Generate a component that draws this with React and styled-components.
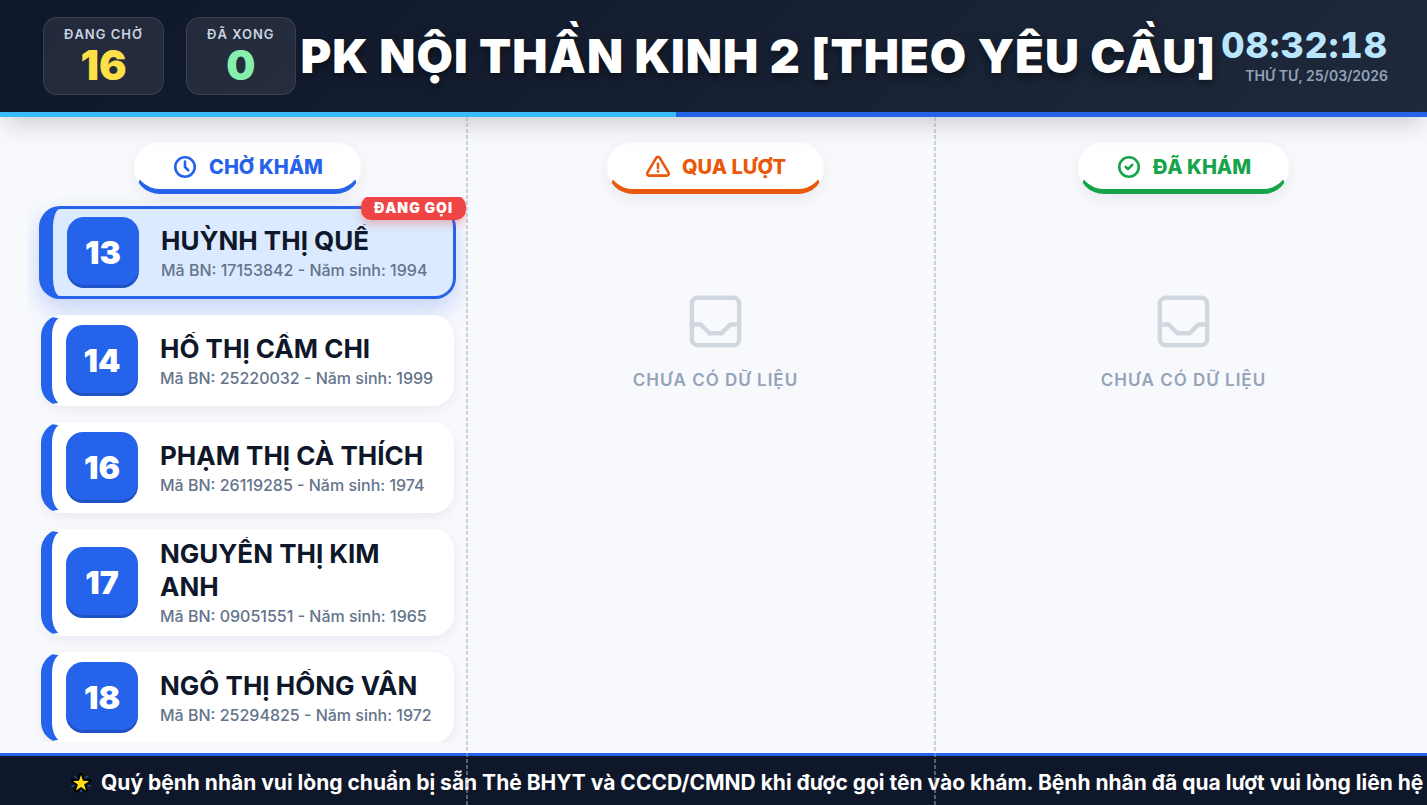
import React from 'react';
import styled, { createGlobalStyle } from 'styled-components';
import { TbClock, TbAlertTriangle, TbCircleCheck, TbInbox } from 'react-icons/tb';

const waiting = [
	{ number: 13, name: 'HUỲNH THỊ QUẾ', code: '17153842', year: 1994, calling: true },
	{ number: 14, name: 'HỒ THỊ CẨM CHI', code: '25220032', year: 1999 },
	{ number: 16, name: 'PHẠM THỊ CÀ THÍCH', code: '26119285', year: 1974 },
	{ number: 17, name: 'NGUYỄN THỊ KIM ANH', code: '09051551', year: 1965 },
	{ number: 18, name: 'NGÔ THỊ HỒNG VÂN', code: '25294825', year: 1972 },
];

const columns = [
	{ title: 'CHỜ KHÁM', color: '#2563eb', icon: TbClock, patients: waiting },
	{ title: 'QUA LƯỢT', color: '#ea580c', icon: TbAlertTriangle, patients: [] },
	{ title: 'ĐÃ KHÁM', color: '#16a34a', icon: TbCircleCheck, patients: [] },
];

function PatientCard({ patient }) {
	return (
		<Card $calling={patient.calling}>
			{patient.calling ? <CallingBadge>ĐANG GỌI</CallingBadge> : null}
			<QueueNumber>{patient.number}</QueueNumber>
			<PatientInfo>
				<PatientName>{patient.name}</PatientName>
				<PatientMeta>Mã BN: {patient.code} - Năm sinh: {patient.year}</PatientMeta>
			</PatientInfo>
		</Card>
	);
}

function QueueColumn({ title, color, icon: Icon, patients }) {
	return (
		<Column>
			<ColumnTitle $color={color}>
				<Icon size={26} />
				{title}
			</ColumnTitle>
			{patients.length > 0 ? (
				<PatientList>
					{patients.map((patient) => <PatientCard key={patient.number} patient={patient} />)}
				</PatientList>
			) : (
				<Empty>
					<TbInbox size={71} />
					<p>CHƯA CÓ DỮ LIỆU</p>
				</Empty>
			)}
		</Column>
	);
}

function StarIcon() {
	return (
		<Star width="22" height="22" viewBox="0 0 22 22" aria-hidden="true">
			<path
				d="M11 3L13 8.700L19.100 8.900L14.200 12.600L16 18.400L11 14.900L6 18.400L7.800 12.600L2.900 8.900L9 8.700Z"
				fill="#ffde17"
				stroke="#000"
				strokeWidth="4"
				strokeLinejoin="round"
				paintOrder="stroke"
			/>
			<path d="M4.500 4l2.500 2.500M17.500 4l-2.500 2.500M1.500 14.500l3-1.200M20.500 14.500l-3-1.200M11 17.500v2.500" stroke="#2b8fb8" strokeWidth="0.9" fill="none" />
		</Star>
	);
}

export default function App() {
	return (
		<Page>
			<GlobalStyle />
			<Header>
				<Stats>
					<Stat>
						<StatLabel>ĐANG CHỜ</StatLabel>
						<StatValue $color="#fde047">16</StatValue>
					</Stat>
					<Stat>
						<StatLabel>ĐÃ XONG</StatLabel>
						<StatValue $color="#86efac">0</StatValue>
					</Stat>
				</Stats>
				<RoomName>PK NỘI THẦN KINH 2 [THEO YÊU CẦU]</RoomName>
				<Clockface>
					<Time>08:32:18</Time>
					<Today>THỨ TƯ, 25/03/2026</Today>
				</Clockface>
				<Progress />
			</Header>
			<Board>
				{columns.map((column) => <QueueColumn key={column.title} {...column} />)}
			</Board>
			<Footer>
				<StarIcon />
				<Notice>Quý bệnh nhân vui lòng chuẩn bị sẵn Thẻ BHYT và CCCD/CMND khi được gọi tên vào khám. Bệnh nhân đã qua lượt vui lòng liên hệ</Notice>
			</Footer>
		</Page>
	);
}

const GlobalStyle = createGlobalStyle`
	* {
		box-sizing: border-box;
	}

	body {
		margin: 0;
		background: #f8f9fd;
		font-family: Inter, "Noto Sans", sans-serif;
	}

	h1, h2, h3, p, ul {
		margin: 0;
		padding: 0;
	}
`;

const Page = styled.div`
	display: flex;
	flex-direction: column;
	height: 100vh;
	overflow: hidden;
	background: #f8f9fd;
	color: #0f172a;
`;

const Header = styled.header`
	position: relative;
	z-index: 2;
	display: flex;
	align-items: center;
	justify-content: space-between;
	height: 117px;
	padding: 0 39px 0 43px;
	border-bottom: 5px solid #2563eb;
	background: linear-gradient(135deg, #0f172a, #1e293b) padding-box;
	box-shadow: 0 10px 25px -5px rgba(0, 0, 0, 0.2);
`;

const Progress = styled.div`
	position: absolute;
	left: 0;
	bottom: -5px;
	width: 47.4%;
	height: 5px;
	background: #38bdf8;
`;

const Stats = styled.div`
	display: flex;
	gap: 22px;
`;

const Stat = styled.div`
	display: flex;
	flex-direction: column;
	align-items: center;
	height: 78px;
	padding: 8px 20px;
	border: 1px solid rgba(255, 255, 255, 0.1);
	border-radius: 14px;
	background: rgba(255, 255, 255, 0.08);
`;

const StatLabel = styled.span`
	color: #cbd5e1;
	font-size: 13px;
	font-weight: 600;
	line-height: 17px;
	letter-spacing: 1px;
	white-space: nowrap;
`;

const StatValue = styled.strong`
	color: ${(props) => props.$color};
	font-size: 41px;
	font-weight: 900;
	line-height: 44px;
`;

const RoomName = styled.h1`
	color: white;
	font-size: 47px;
	font-weight: 900;
	line-height: 56px;
	letter-spacing: 1px;
	white-space: nowrap;
	text-shadow: 0 4px 8px rgba(0, 0, 0, 0.5);
`;

const Clockface = styled.div`
	text-align: right;
`;

const Time = styled.p`
	color: #bae6fd;
	font-size: 36px;
	font-weight: 800;
	line-height: 40px;
	letter-spacing: 1px;
	font-variant-numeric: tabular-nums;
`;

const Today = styled.p`
	color: #94a3b8;
	font-size: 14px;
	font-weight: 600;
	line-height: 22px;
`;

const Board = styled.main`
	display: grid;
	grid-template-columns: repeat(3, 1fr);
	gap: 29px;
	flex: 1;
	min-height: 0;
	padding: 25px 24px 11px 28px;
`;

const Column = styled.section`
	position: relative;
	display: flex;
	flex-direction: column;
	min-width: 0;
	min-height: 0;

	&:not(:last-child)::after {
		content: '';
		position: absolute;
		z-index: 3;
		top: -25px;
		right: -1px;
		bottom: -63px;
		width: 2px;
		background: repeating-linear-gradient(rgba(160, 166, 178, 0.5) 0 4px, transparent 4px 6px);
	}
`;

const ColumnTitle = styled.h2`
	display: flex;
	align-items: center;
	align-self: center;
	flex-shrink: 0;
	gap: 11px;
	height: 52px;
	padding: 0 36px;
	border: 2px solid transparent;
	border-bottom: 5px solid ${(props) => props.$color};
	border-radius: 26px;
	background: white;
	box-shadow: 0 6px 16px rgba(15, 23, 42, 0.06);
	color: ${(props) => props.$color};
	font-size: 20px;
	font-weight: 800;
	line-height: 24px;

	svg {
		stroke-width: 2.4;
	}
`;

const PatientList = styled.ul`
	display: flex;
	flex-direction: column;
	gap: 16px;
	flex: 1;
	min-height: 0;
	margin-top: 3px;
	padding: 9px 13px;
	overflow: hidden;
	list-style: none;
`;

const Card = styled.li`
	position: relative;
	display: flex;
	align-items: center;
	flex-shrink: 0;
	gap: 22px;
	min-height: ${(props) => (props.$calling ? '93px' : '91px')};
	margin: ${(props) => (props.$calling ? '0 -2px' : '0')};
	padding: 6px 14px;
	border: ${(props) => (props.$calling ? '3px solid #2563eb' : '2px solid transparent')};
	border-left: ${(props) => (props.$calling ? '14px' : '11px')} solid #2563eb;
	border-radius: 21px;
	background: ${(props) => (props.$calling ? '#dbeafe' : 'white')};
	box-shadow: ${(props) => (props.$calling
		? '0 10px 24px rgba(37, 99, 235, 0.25)'
		: '0 4px 12px rgba(15, 23, 42, 0.06)')};
`;

const CallingBadge = styled.span`
	position: absolute;
	top: -13px;
	right: -13px;
	padding: 4px 13px;
	border-radius: 10px;
	background: #ef4444;
	box-shadow: 0 4px 8px rgba(239, 68, 68, 0.35);
	color: white;
	font-size: 14px;
	font-weight: 900;
	line-height: 16px;
	letter-spacing: 1px;
`;

const QueueNumber = styled.span`
	display: flex;
	align-items: center;
	justify-content: center;
	flex-shrink: 0;
	width: 72px;
	height: 71px;
	border-radius: 17px;
	background: #2563eb;
	box-shadow: inset 0 -3px 0 rgba(0, 0, 0, 0.16);
	color: white;
	font-size: 32px;
	font-weight: 900;
`;

const PatientInfo = styled.div`
	min-width: 0;
`;

const PatientName = styled.h3`
	margin-bottom: 1px;
	overflow: hidden;
	font-size: 26px;
	font-weight: 700;
	line-height: 33px;
`;

const PatientMeta = styled.p`
	color: #64748b;
	font-size: 16px;
	font-weight: 500;
	line-height: 24px;
	white-space: nowrap;
`;

const Empty = styled.div`
	display: flex;
	flex-direction: column;
	align-items: center;
	gap: 12px;
	margin-top: 92px;
	color: #94a3b8;
	font-size: 17px;
	font-weight: 600;
	line-height: 22px;
	letter-spacing: 1px;

	svg {
		color: #d1d7de;
		stroke-width: 1.5;
	}
`;

const Footer = styled.footer`
	display: flex;
	align-items: center;
	gap: 9px;
	flex-shrink: 0;
	height: 52px;
	padding: 4px 0 0 70px;
	border-top: 3px solid #2563eb;
	background: #0f172a;
	overflow: hidden;
`;

const Star = styled.svg`
	flex-shrink: 0;
`;

const Notice = styled.p`
	color: white;
	font-size: 21px;
	font-weight: 700;
	line-height: 28px;
	white-space: nowrap;
`;
